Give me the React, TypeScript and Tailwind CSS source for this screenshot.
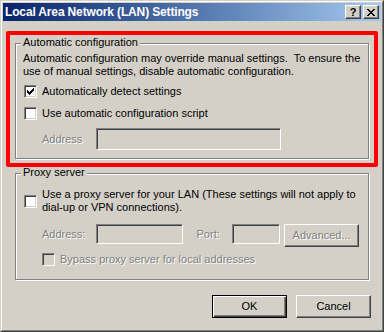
import React from "react";

const sunken =
  "border border-t-[#808080] border-l-[#808080] border-b-white border-r-white shadow-[inset_1px_1px_0_#404040,inset_-1px_-1px_0_#d4d0c8]";
const raised =
  "border border-t-white border-l-white border-r-[#404040] border-b-[#404040] shadow-[inset_-1px_-1px_0_#808080] bg-[#d4d0c8]";
const dis = "text-[#808080] [text-shadow:1px_1px_0_#fff]";
const group =
  "flex flex-col border border-[#808080] shadow-[inset_1px_1px_0_#fff,1px_1px_0_#fff] pl-[7px] pr-[9px]";

function Check({ checked, disabled }: { checked?: boolean; disabled?: boolean }) {
  return (
    <div
      className={`w-[13px] h-[13px] shrink-0 flex items-center justify-center ${sunken} ${
        disabled ? "bg-[#d4d0c8]" : "bg-white"
      }`}
    >
      {checked && (
        <svg width="7" height="7" viewBox="0 0 7 7" shapeRendering="crispEdges">
          <path
            d="M0 2h1v3H0zM1 3h1v3H1zM2 4h1v3H2zM3 3h1v3H3zM4 2h1v3H4zM5 1h1v3H5zM6 0h1v3H6z"
            fill="#000"
          />
        </svg>
      )}
    </div>
  );
}

export default function App() {
  return (
    <div className="relative w-[384px] h-[332px] bg-[#d4d0c8] border border-t-[#d4d0c8] border-l-[#d4d0c8] border-r-[#404040] border-b-[#404040] font-['Liberation_Sans',Arial,sans-serif] text-[11px] leading-[13px] text-black">
      <div className="h-full flex flex-col border border-t-white border-l-white border-r-[#808080] border-b-[#808080] p-[1px]">
        {/* Title bar */}
        <div className="h-[18px] shrink-0 flex items-center pl-[2px] pr-[2px] bg-linear-to-r from-[#0a246a] to-[#a6caf0]">
          <span className="text-white font-bold text-[12px] tracking-[-0.15px]">Local Area Network (LAN) Settings</span>
          <div className="ml-auto flex gap-[2px]">
            <div className={`w-[16px] h-[14px] flex items-center justify-center ${raised}`}>
              <span className="font-bold text-[11px] leading-[11px] text-black">?</span>
            </div>
            <div className={`w-[16px] h-[14px] flex items-center justify-center ${raised}`}>
              <svg width="8" height="7" viewBox="0 0 8 7" shapeRendering="crispEdges">
                <path
                  d="M0 0h2v1H0zM6 0h2v1H6zM1 1h2v1H1zM5 1h2v1H5zM2 2h4v1H2zM3 3h2v1H3zM2 4h4v1H2zM1 5h2v1H1zM5 5h2v1H5zM0 6h2v1H0zM6 6h2v1H6z"
                  fill="#000"
                />
              </svg>
            </div>
          </div>
        </div>

        {/* Body */}
        <div className="flex flex-col px-[12px] pt-[22px]">
          {/* Automatic configuration */}
          <div className={group}>
            <span className="-mt-[8px] -ml-[2px] self-start px-[2px] bg-[#d4d0c8]">Automatic configuration</span>
            <p className="mt-[3px] whitespace-pre">
              {"Automatic configuration may override manual settings.  To ensure the"}
              <br />
              {"use of manual settings, disable automatic configuration."}
            </p>
            <div className="mt-[7px] ml-[1px] flex items-center gap-[5px] h-[13px]">
              <Check checked />
              <span>Automatically detect settings</span>
            </div>
            <div className="mt-[9px] ml-[1px] flex items-center gap-[5px] h-[13px]">
              <Check />
              <span>Use automatic configuration script</span>
            </div>
            <div className="mt-[8px] mb-[8px] ml-[19px] flex items-center">
              <span className={`w-[54px] ${dis}`}>Address</span>
              <div className={`w-[185px] h-[22px] bg-[#d4d0c8] ${sunken}`} />
            </div>
          </div>

          {/* Proxy server */}
          <div className={`mt-[14px] ${group}`}>
            <span className="-mt-[8px] -ml-[2px] self-start px-[2px] bg-[#d4d0c8]">Proxy server</span>
            <div className="mt-[9px] ml-[1px] flex items-center gap-[5px]">
              <Check />
              <span className="whitespace-pre">
                {"Use a proxy server for your LAN (These settings will not apply to"}
                <br />
                {"dial-up or VPN connections)."}
              </span>
            </div>
            <div className="mt-[10px] ml-[19px] flex items-start h-[23px]">
              <div className="w-[54px] h-[20px] flex items-center">
                <span className={dis}>Address:</span>
              </div>
              <div className={`w-[87px] h-[20px] bg-[#d4d0c8] ${sunken}`} />
              <div className="ml-[14px] w-[36px] h-[20px] flex items-center">
                <span className={dis}>Port:</span>
              </div>
              <div className={`w-[48px] h-[20px] bg-[#d4d0c8] ${sunken}`} />
              <div className={`ml-[4px] w-[75px] h-[23px] flex items-center justify-center ${raised}`}>
                <span className={dis}>Advanced...</span>
              </div>
            </div>
            <div className="mt-[6px] mb-[13px] ml-[19px] flex items-center gap-[5px] h-[13px]">
              <Check disabled />
              <span className={dis}>Bypass proxy server for local addresses</span>
            </div>
          </div>
        </div>

        {/* Buttons */}
        <div className="mt-[15px] pr-[10px] flex justify-end gap-[9px]">
          <div className="w-[75px] h-[23px] flex items-center justify-center bg-[#d4d0c8] border border-black shadow-[inset_1px_1px_0_#fff,inset_-1px_-1px_0_#404040,inset_-2px_-2px_0_#808080]">
            OK
          </div>
          <div className={`w-[75px] h-[23px] flex items-center justify-center ${raised}`}>Cancel</div>
        </div>
      </div>

      {/* Red annotation */}
      <div className="absolute left-[5px] top-[30px] w-[372px] h-[136px] border-[4px] border-[#ff0000] rounded-[2px] pointer-events-none" />
    </div>
  );
}
